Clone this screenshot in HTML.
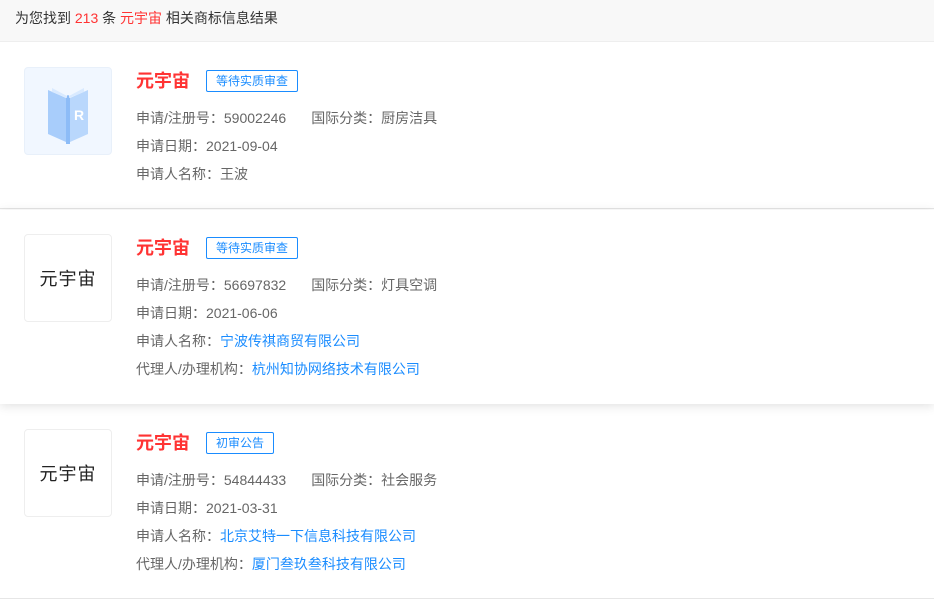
<!DOCTYPE html>
<html><head><meta charset="utf-8"><style>
*{margin:0;padding:0;box-sizing:border-box}
body{width:934px;height:600px;overflow:hidden;background:#fff;font-family:"Liberation Sans","Noto Sans CJK SC",sans-serif;position:relative}
.hdr{position:absolute;left:0;top:0;width:934px;height:42px;background:#f8f8f8;border-bottom:1px solid #eee;font-size:14px;color:#333;line-height:36px;padding-left:15px}
.r{color:#f33}
.card{position:absolute;left:0;width:934px;background:#fff}
.logo{position:absolute;left:24px;width:88px;height:88px;border:1px solid #eee;border-radius:4px;display:flex;align-items:center;justify-content:center;font-size:18px;color:#222;letter-spacing:1px}
.t{position:absolute;left:136px;font-size:18px;font-weight:bold;color:#f33;line-height:24px}
.tag{position:absolute;left:206px;height:22px;border:1px solid #1a8cff;border-radius:2px;color:#1a8cff;font-size:12px;line-height:20px;padding:0 9px}
.l{position:absolute;left:136px;font-size:14px;color:#666;line-height:20px;white-space:nowrap}
.b{color:#1a8cff}
</style></head><body>
<div class="hdr">为您找到 <span class="r">213</span> 条 <span class="r">元宇宙</span> 相关商标信息结果</div>

<div class="card" style="top:43px;height:166px;border-bottom:1px solid #e6e6e6">
<div class="logo" style="top:24px;background:#f1f7ff;border-color:#e8f0fa">
<svg width="60" height="70" viewBox="0 0 60 70"><path d="M10 14 L28 22 L28 66 L10 58Z" fill="#a8cdfb"/><path d="M50 14 L32 22 L32 66 L50 58Z" fill="#b9d7fc"/><path d="M28 22 Q30 16 32 22 L32 68 L28 68Z" fill="#8dbcf7"/><path d="M14 12 L29 20 L29 22 L14 16Z M46 12 L31 20 L31 22 L46 16Z" fill="#d9eaff"/><text x="36" y="44" font-size="14" fill="#fff" font-family="Liberation Sans" font-weight="bold">R</text></svg>
</div>
<div class="t" style="top:26px">元宇宙</div>
<div class="tag" style="top:27px">等待实质审查</div>
<div class="l" style="top:65px">申请/注册号：59002246<span style="margin-left:25px">国际分类：厨房洁具</span></div>
<div class="l" style="top:93px">申请日期：2021-09-04</div>
<div class="l" style="top:121px">申请人名称：王波</div>
</div>

<div class="card" style="top:210px;height:194px;box-shadow:0 2px 10px rgba(0,0,0,0.12);z-index:2">
<div class="logo" style="top:24px">元宇宙</div>
<div class="t" style="top:26px">元宇宙</div>
<div class="tag" style="top:27px">等待实质审查</div>
<div class="l" style="top:65px">申请/注册号：56697832<span style="margin-left:25px">国际分类：灯具空调</span></div>
<div class="l" style="top:93px">申请日期：2021-06-06</div>
<div class="l" style="top:121px">申请人名称：<span class="b">宁波传祺商贸有限公司</span></div>
<div class="l" style="top:149px">代理人/办理机构：<span class="b">杭州知协网络技术有限公司</span></div>
</div>

<div class="card" style="top:405px;height:194px;border-bottom:1px solid #e6e6e6">
<div class="logo" style="top:24px">元宇宙</div>
<div class="t" style="top:26px">元宇宙</div>
<div class="tag" style="top:27px">初审公告</div>
<div class="l" style="top:65px">申请/注册号：54844433<span style="margin-left:25px">国际分类：社会服务</span></div>
<div class="l" style="top:93px">申请日期：2021-03-31</div>
<div class="l" style="top:121px">申请人名称：<span class="b">北京艾特一下信息科技有限公司</span></div>
<div class="l" style="top:149px">代理人/办理机构：<span class="b">厦门叁玖叁科技有限公司</span></div>
</div>
</body></html>
